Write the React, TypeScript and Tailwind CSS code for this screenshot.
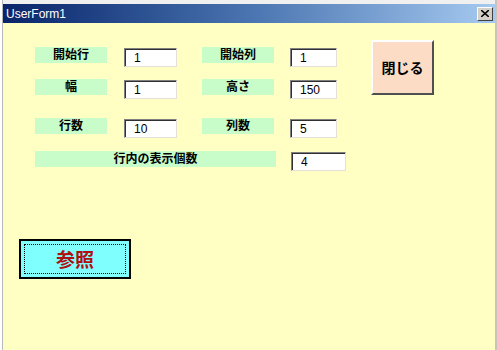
import React from 'react';

const jp = "font-['Noto_Sans_CJK_JP',sans-serif]";

interface FieldRowProps {
  label: string;
  value: string;
  label2?: string;
  value2?: string;
  wide?: boolean;
  className?: string;
}

const Label: React.FC<{ text: string; width: string }> = ({ text, width }) => (
  <div className={`${width} h-4 bg-[#c8fcc8] text-center text-[12px] font-bold leading-[14px] text-black ${jp}`}>
    {text}
  </div>
);

const TextBox: React.FC<{ value: string; className: string }> = ({ value, className }) => (
  <div
    className={`mt-px h-[19px] bg-white border border-t-[#808080] border-l-[#808080] border-b-[#e4e0d8] border-r-[#e4e0d8] shadow-[inset_1px_1px_0_#303030] pl-[9px] text-[12px] leading-[18px] text-black font-['Liberation_Sans',sans-serif] ${className}`}
  >
    {value}
  </div>
);

const FieldRow: React.FC<FieldRowProps> = ({ label, value, label2, value2, wide, className }) => {
  if (wide) {
    return (
      <div className={`flex items-start ${className ?? ''}`}>
        <Label text={label} width="w-[241px]" />
        <TextBox value={value} className="ml-[15px] w-[55px]" />
      </div>
    );
  }
  return (
    <div className={`flex items-start ${className ?? ''}`}>
      <Label text={label} width="w-[72px]" />
      <TextBox value={value} className="ml-[17px] w-[53px]" />
      <div className="ml-[25px]">
        <Label text={label2 ?? ''} width="w-[72px]" />
      </div>
      <TextBox value={value2 ?? ''} className="ml-4 w-[47px]" />
    </div>
  );
};

export default function App() {
  return (
    <div className="flex h-[350px] w-[497px] overflow-hidden bg-[#f0f0f0]">
      {/* strip of the window behind */}
      <div className="w-[3px] border-r border-[#b8b8b8] bg-white" />

      <div className="flex flex-1 flex-col border-r-2 border-[#c8c4bc] pt-1">
        {/* title bar */}
        <div className="flex h-[19px] items-center justify-between bg-gradient-to-r from-[#0a246a] via-[#4a74b0] to-[#a6caf0] pl-[3px] pr-[2px]">
          <span className="text-[12px] leading-none text-white font-['Liberation_Sans',sans-serif]">UserForm1</span>
          <div className="flex h-[14px] w-[16px] items-center justify-center border border-t-white border-l-white border-b-[#404040] border-r-[#404040] bg-[#d4d0c8]">
            <svg width="8" height="7" viewBox="0 0 8 7">
              <path d="M0 0 L8 7 M8 0 L0 7" stroke="black" strokeWidth="1.6" />
            </svg>
          </div>
        </div>

        {/* form body */}
        <div className="flex flex-1 flex-col bg-[#ffffc4] pl-4">
          <div className="flex items-start">
            <div className="ml-4 flex flex-col pt-6">
              <FieldRow label="開始行" value="1" label2="開始列" value2="1" />
              <FieldRow label="幅" value="1" label2="高さ" value2="150" className="mt-3" />
              <FieldRow label="行数" value="10" label2="列数" value2="5" className="mt-[19px]" />
              <FieldRow label="行内の表示個数" value="4" wide className="mt-[13px]" />
            </div>
            <button
              className={`ml-[25px] mt-[17px] h-[55px] w-[63px] border-2 border-t-white border-l-white border-b-[#505050] border-r-[#505050] bg-[#fcdcc4] text-[14px] font-bold text-black ${jp}`}
            >
              閉じる
            </button>
          </div>

          <button className="mt-[68px] h-10 w-[112px] border-2 border-black bg-[#80ffff] p-[3px]">
            <div
              className={`flex h-full w-full items-center justify-center border border-dotted border-black text-[19px] font-bold text-[#b01010] ${jp}`}
            >
              参照
            </div>
          </button>
        </div>
      </div>
    </div>
  );
}
